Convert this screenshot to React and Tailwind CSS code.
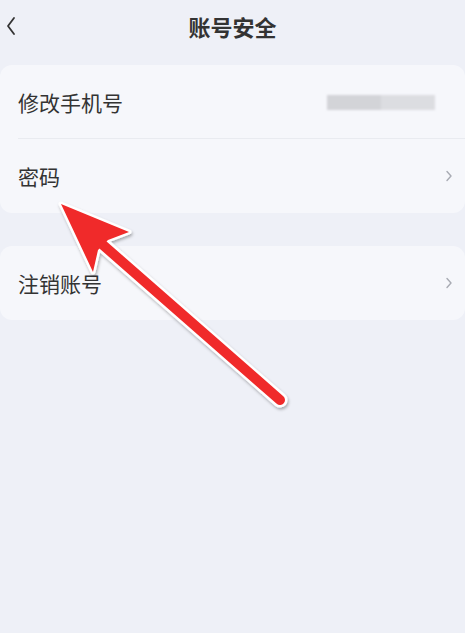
import React from "react";

const font = { fontFamily: '"Noto Sans CJK SC", "Noto Sans", sans-serif' };

function Chevron() {
  return (
    <svg width="8" height="14" viewBox="0 0 8 14" className="shrink-0">
      <path d="M2 2.5 L6 7 L2 11.5" fill="none" stroke="#a8abb3" strokeWidth="1.4" strokeLinecap="round" strokeLinejoin="round" />
    </svg>
  );
}

function Row({ label, right, divider }) {
  return (
    <div className="relative flex items-center justify-between h-[74px] pl-[18px] pr-[12px]">
      <span className="text-[21px] text-[#333333] leading-none">{label}</span>
      {right}
      {divider && <div className="absolute left-[18px] right-0 bottom-0 h-px bg-[#e9ebf0]" />}
    </div>
  );
}

export default function App() {
  return (
    <div className="relative w-[465px] h-[633px] bg-[#eef0f7] overflow-hidden" style={font}>
      <div className="relative flex items-center justify-center h-[52px]">
        <svg width="12" height="20" viewBox="0 0 12 20" className="absolute left-[5px] top-[16px]">
          <path d="M9 2 L3 10 L9 18" fill="none" stroke="#333" strokeWidth="1.8" strokeLinecap="round" strokeLinejoin="round" />
        </svg>
        <span className="text-[22px] font-bold text-[#333333]">账号安全</span>
      </div>
      <div className="mt-[13px] flex flex-col gap-[33px]">
        <div className="bg-[#f6f7fb] rounded-[12px]">
          <Row
            label="修改手机号"
            divider
            right={
              <div className="flex items-center mr-[16px] h-[15px] w-[110px] blur-[1px]">
                <div className="h-full w-[54px] bg-[#d3d4d8]" />
                <div className="h-full w-[54px] bg-[#dcdde1]" />
              </div>
            }
          />
          <Row label="密码" right={<Chevron />} />
        </div>
        <div className="bg-[#f6f7fb] rounded-[12px]">
          <Row label="注销账号" right={<Chevron />} />
        </div>
      </div>
      <svg className="absolute left-0 top-0 pointer-events-none" width="465" height="633" viewBox="0 0 465 633">
        <defs>
          <filter id="sh" x="-20%" y="-20%" width="140%" height="140%">
            <feDropShadow dx="1" dy="2" stdDeviation="1.5" floodColor="#000" floodOpacity="0.3" />
          </filter>
        </defs>
        <g filter="url(#sh)">
          <line x1="103" y1="245" x2="280" y2="400" stroke="#ffffff" strokeWidth="15" strokeLinecap="round" />
          <polygon points="61,204 129,232 108,240 98,250 93,272" fill="#ffffff" stroke="#ffffff" strokeWidth="5" strokeLinejoin="round" />
        </g>
        <line x1="103" y1="245" x2="280" y2="400" stroke="#f02a2a" strokeWidth="10" strokeLinecap="round" />
        <polygon points="61,204 129,232 108,240 98,250 93,272" fill="#f02a2a" />
      </svg>
    </div>
  );
}
